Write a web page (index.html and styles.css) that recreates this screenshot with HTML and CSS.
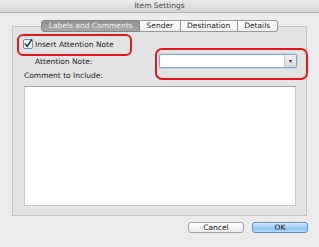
FILE: index.html
```html
<!DOCTYPE html>
<html lang="en">
<head>
    <meta charset="UTF-8">
    <meta name="viewport" content="width=device-width, initial-scale=1.0">
    <title>Item Settings</title>
    <link rel="stylesheet" href="styles.css">
</head>
<body>
    <div class="window">
        <div class="titlebar">Item Settings</div>
        <div class="main">
            <div class="tabs">
                <span class="tab active">Labels and Comments</span>
                <span class="tab">Sender</span>
                <span class="tab">Destination</span>
                <span class="tab">Details</span>
            </div>
            <div class="panel">
                <label class="check-row">
                    <svg class="checkbox" width="10" height="10" viewBox="0 0 10 10">
                        <defs>
                            <linearGradient id="cb" x1="0" y1="0" x2="0" y2="1">
                                <stop offset="0" stop-color="#ffffff"/>
                                <stop offset="1" stop-color="#dfe9f5"/>
                            </linearGradient>
                        </defs>
                        <rect x="0.5" y="0.5" width="9" height="9" rx="1.5" fill="url(#cb)" stroke="#6f8fb8"/>
                        <path d="M2.2 4.9 L4.2 7.4 L8.6 0.8" fill="none" stroke="#1d2f57" stroke-width="1.5" stroke-linecap="round" stroke-linejoin="round"/>
                    </svg>
                    <span>Insert Attention Note</span>
                </label>
                <div class="note-row">
                    <span class="note-label">Attention Note:</span>
                    <div class="select">
                        <span class="select-arrow">&#9662;</span>
                    </div>
                </div>
                <div class="comment-label">Comment to Include:</div>
                <div class="comment-box"></div>
            </div>
            <div class="buttons">
                <button class="btn">Cancel</button>
                <button class="btn btn-default">OK</button>
            </div>
        </div>
    </div>
</body>
</html>
```
FILE: styles.css
```css
* { margin: 0; padding: 0; box-sizing: border-box; }

body {
    font-family: 'DejaVu Sans', sans-serif;
    font-size: 7.5px;
    color: #1e1e1e;
    background: #ececec;
}

.window {
    width: 319px;
    height: 247px;
    background: #ececec;
    overflow: hidden;
}

.titlebar {
    height: 13px;
    line-height: 12px;
    text-align: center;
    color: #4a4a4a;
    background: linear-gradient(180deg, #ebebeb, #d5d5d5);
    border-bottom: 1px solid #b3b3b3;
}

.main {
    padding: 7px 12px 0 12px;
}

.tabs {
    position: relative;
    z-index: 1;
    display: flex;
    justify-content: center;
    height: 12px;
}

.tab {
    padding: 0 6.5px;
    line-height: 10px;
    background: linear-gradient(180deg, #ffffff, #eeeeee);
    border: 1px solid #999999;
    border-left: none;
    color: #1e1e1e;
}

.tab:first-child {
    border-left: 1px solid #8c8c8c;
    border-radius: 3px 0 0 3px;
}

.tab:last-child {
    border-radius: 0 3px 3px 0;
}

.tab.active {
    background: linear-gradient(180deg, #8f8f8f, #a9a9a9);
    border-color: #858585;
    color: #f2f2f2;
}

.panel {
    height: 190px;
    margin-top: -6px;
    padding: 11px 10px 0 10px;
    background: #e3e3e3;
    border: 1px solid #c4c4c4;
}

.check-row {
    position: relative;
    display: flex;
    align-items: center;
    gap: 2px;
    height: 12px;
}

.check-row::after {
    content: '';
    position: absolute;
    left: -6px;
    top: -4px;
    width: 111px;
    height: 18px;
    border: 2px solid #e3161b;
    border-radius: 6px;
}

.checkbox {
    display: block;
}

.note-row {
    display: flex;
    align-items: center;
    height: 14px;
    margin-top: 4px;
}

.note-label {
    margin-left: 12px;
}

.select {
    position: relative;
    width: 138px;
    height: 14px;
    margin-left: auto;
    margin-right: -1px;
    background: #ffffff;
    border: 1px solid #8ea6c6;
    box-shadow: 0 0 0 1px #c3d3e8;
    border-radius: 2px;
}

.select::after {
    content: '';
    position: absolute;
    left: -5px;
    top: -7px;
    width: 149px;
    height: 28px;
    border: 2px solid #e3161b;
    border-radius: 7px;
}

.select-arrow {
    position: absolute;
    right: 0;
    top: 0;
    bottom: 0;
    width: 12px;
    font-size: 6px;
    line-height: 12px;
    text-align: center;
    color: #333333;
    background: linear-gradient(180deg, #f2f2f2, #d9d9d9);
    border-left: 1px solid #c8c8c8;
}

.comment-label {
    margin-top: 3px;
    padding-left: 1px;
    line-height: 10px;
}

.comment-box {
    height: 120px;
    margin-top: 5px;
    margin-left: 1px;
    background: #ffffff;
    border: 1px solid #c7c7c7;
    border-top-color: #a3a3a3;
}

.buttons {
    display: flex;
    justify-content: flex-end;
    gap: 8px;
    margin-top: 6px;
    margin-right: -1px;
}

.btn {
    width: 56px;
    height: 11px;
    font-family: 'DejaVu Sans', sans-serif;
    font-size: 7.5px;
    line-height: 9px;
    color: #111111;
    background: linear-gradient(180deg, #ffffff, #ececec);
    border: 1px solid #a0a0a0;
    border-radius: 3px;
}

.btn-default {
    background: linear-gradient(180deg, #d4e8fc 0%, #9ccbf5 50%, #86bdf0 51%, #b6dbfb 100%);
    border-color: #5f8dc9;
}
```
